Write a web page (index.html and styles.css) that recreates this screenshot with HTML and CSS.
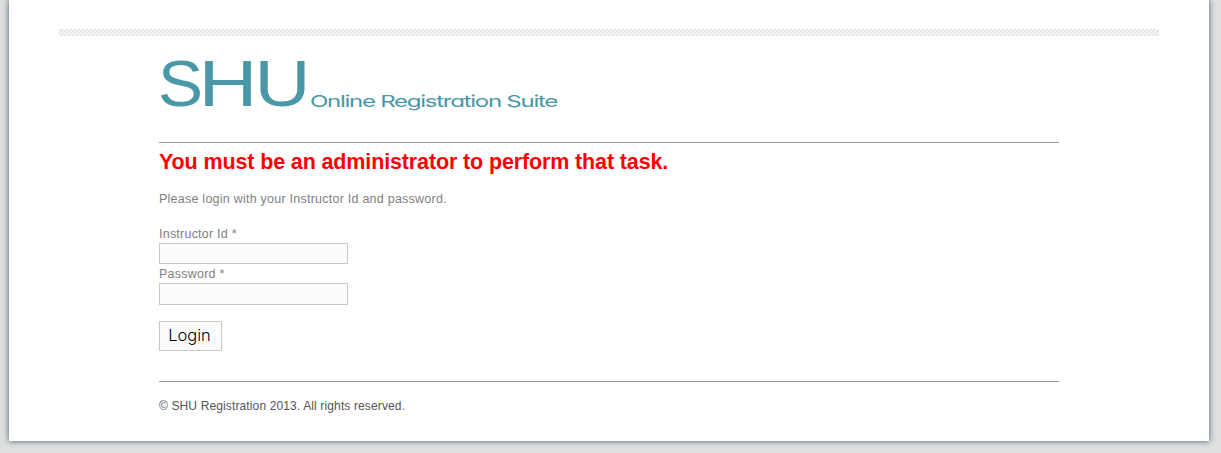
FILE: index.html
```html
<!DOCTYPE html>
<html lang="en">
<head>
<meta charset="utf-8">
<title>SHU Online Registration Suite</title>
<link rel="stylesheet" href="styles.css">
</head>
<body>
<div class="page">
  <div class="stripe"></div>
  <div class="content">
    <header class="header">
      <svg class="logo" width="410" height="70" viewBox="0 0 410 70" role="img">
        <g class="logo-big">
          <text x="-1" y="56" textLength="45" lengthAdjust="spacingAndGlyphs">S</text>
          <text x="39.5" y="56" textLength="59" lengthAdjust="spacingAndGlyphs">H</text>
          <text x="95.5" y="56" textLength="56" lengthAdjust="spacingAndGlyphs">U</text>
        </g>
        <text class="logo-small" x="151" y="57" textLength="247" lengthAdjust="spacingAndGlyphs">Online Registration Suite</text>
      </svg>
    </header>
    <main class="main">
      <h1 class="error">You must be an administrator to perform that task.</h1>
      <p class="intro">Please login with your Instructor Id and password.</p>
      <form class="form">
        <label class="label" for="uid">Instructor Id *</label>
        <input class="field" id="uid" type="text">
        <label class="label" for="pwd">Password *</label>
        <input class="field field-last" id="pwd" type="password">
        <button class="login" type="button">Login</button>
      </form>
    </main>
    <footer class="footer">© SHU Registration 2013. All rights reserved.</footer>
  </div>
</div>
</body>
</html>
```
FILE: styles.css
```css
* { box-sizing: border-box; }
body {
  margin: 0;
  height: 453px;
  overflow: hidden;
  background: #dfe0e0;
  font-family: "Liberation Sans", Arial, sans-serif;
  color: #808080;
}
.page {
  width: 1200px;
  height: 441px;
  margin-left: 9px;
  padding: 29px 50px 0;
  background: #fff;
  box-shadow: 0 0 6px #3f5964;
}
.stripe {
  height: 7px;
  background: linear-gradient(135deg, #e3e3e3 12.5%, #f8f8f8 12.5% 37.5%, #e3e3e3 37.5% 62.5%, #f8f8f8 62.5% 87.5%, #e3e3e3 87.5%) 0 0 / 4px 4px;
}
.content { width: 900px; margin: 0 auto; }
.header { height: 107px; padding-top: 14px; border-bottom: 1px solid #999; }
.logo { display: block; overflow: visible; fill: #4a97a7; }
.logo-big { font-size: 65px; }
.logo-small { font-family: Inter, sans-serif; font-size: 16.5px; font-weight: 400; letter-spacing: -.9px; font-feature-settings: "cv11"; }
.main { height: 239px; border-bottom: 1px solid #999; }
.error { margin: 0; padding-top: 7px; font-size: 21.5px; line-height: 25px; color: #f00; letter-spacing: -.13px; white-space: nowrap; }
.intro { margin: 15px 0 17px; font-size: 12.5px; line-height: 18px; letter-spacing: .24px; }
.form { display: flex; flex-direction: column; align-items: flex-start; }
.label { font-size: 12.5px; line-height: 18px; letter-spacing: .23px; }
.field { width: 189px; height: 21px; margin: 0 0 1px; padding: 0; border: 1px solid #c8c8c8; background: #fcfcfc; }
.field-last { height: 22px; margin-bottom: 16px; }
.login { width: 63px; height: 30px; padding: 0 2px 2px 0; border: 1px solid #c8c8c8; background: #fcfcfc; color: #000; font: 300 16.5px/26px Inter, sans-serif; }
.footer { padding-top: 15px; font-size: 12px; line-height: 18px; letter-spacing: .13px; color: #555; }
```
